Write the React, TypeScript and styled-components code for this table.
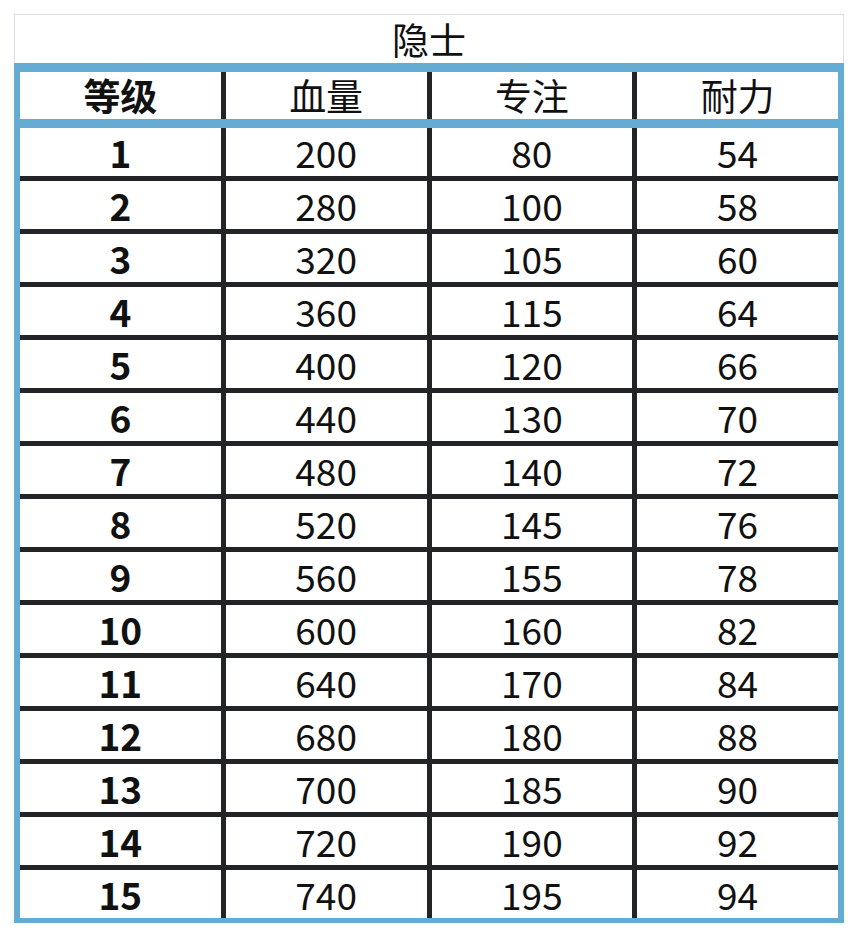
import styled, { createGlobalStyle } from "styled-components";

const GlobalStyle = createGlobalStyle`
	body {
		margin: 0;
		background: #ffffff;
		font-family: "Noto Sans CJK SC", "Noto Sans", sans-serif;
		color: #111111;
	}
`;

const Page = styled.div`
	padding: 14px 0 0 14px;
	width: 830px;
`;

const TitleBar = styled.div`
	height: 48px;
	border: 1px solid #dde0e4;
	border-bottom: none;
	display: flex;
	align-items: center;
	justify-content: center;
	font-size: 37px;
	line-height: 1;
`;

const Table = styled.div`
	border: 6px solid #64acd4;
	border-top-width: 9px;
	border-bottom-width: 5px;
`;

const Grid = styled.div`
	display: grid;
	grid-template-columns: repeat(4, 1fr);
	gap: 5px;
	background: #222428;
`;

const HeaderGrid = styled(Grid)`
	border-bottom: 9px solid #64acd4;
`;

const Cell = styled.div<{ $bold?: boolean; $height: number }>`
	height: ${(p) => p.$height}px;
	background: #ffffff;
	display: flex;
	align-items: center;
	justify-content: center;
	font-size: 37px;
	line-height: 1;
	font-weight: ${(p) => (p.$bold ? 700 : 400)};
`;

const headers = ["等级", "血量", "专注", "耐力"];

const rows: number[][] = [
	[1, 200, 80, 54],
	[2, 280, 100, 58],
	[3, 320, 105, 60],
	[4, 360, 115, 64],
	[5, 400, 120, 66],
	[6, 440, 130, 70],
	[7, 480, 140, 72],
	[8, 520, 145, 76],
	[9, 560, 155, 78],
	[10, 600, 160, 82],
	[11, 640, 170, 84],
	[12, 680, 180, 88],
	[13, 700, 185, 90],
	[14, 720, 190, 92],
	[15, 740, 195, 94],
];

export default function App() {
	return (
		<>
			<GlobalStyle />
			<Page>
				<TitleBar>隐士</TitleBar>
				<Table>
					<HeaderGrid>
						{headers.map((h, i) => (
							<Cell key={h} $height={47} $bold={i === 0}>
								{h}
							</Cell>
						))}
					</HeaderGrid>
					<Grid>
						{rows.map((row) =>
							row.map((v, i) => (
								<Cell key={`${row[0]}-${i}`} $height={48} $bold={i === 0}>
									{v}
								</Cell>
							))
						)}
					</Grid>
				</Table>
			</Page>
		</>
	);
}
